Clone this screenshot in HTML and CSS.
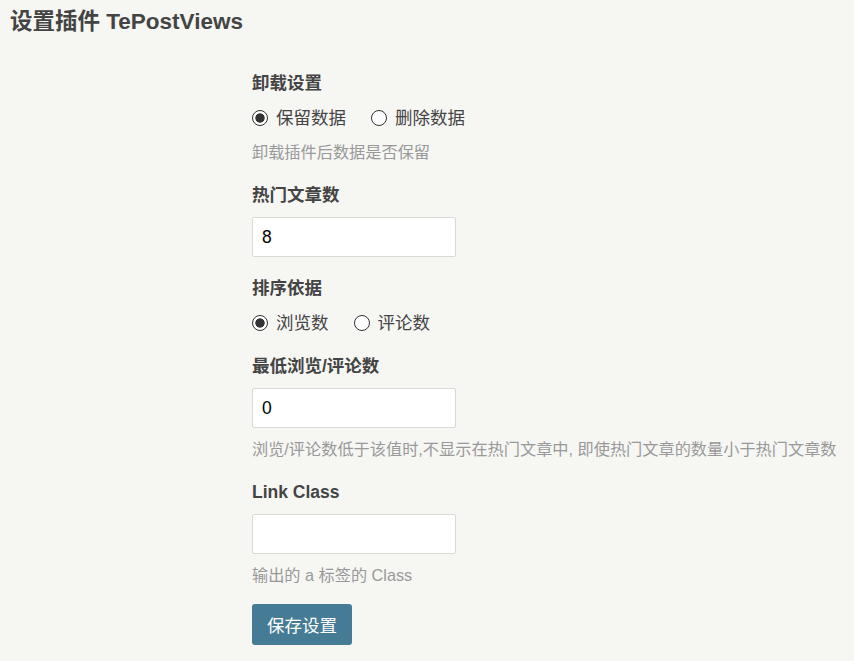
FILE: index.html
```html
<!DOCTYPE html>
<html lang="zh-CN">
<head>
    <meta charset="UTF-8" />
    <meta name="viewport" content="width=device-width, initial-scale=1.0" />
    <title>设置插件 TePostViews</title>
    <link rel="stylesheet" href="styles.css">
</head>
<body>
    <h2 class="page-title">设置插件 TePostViews</h2>

    <form class="option-form">
        <ul class="option">
            <li><label class="option-label">卸载设置</label></li>
            <li class="radio-row">
                <span class="radio-item"><input type="radio" name="drop" id="drop-keep" checked> <label for="drop-keep">保留数据</label></span>
                <span class="radio-item"><input type="radio" name="drop" id="drop-del"> <label for="drop-del">删除数据</label></span>
            </li>
            <li><p class="description">卸载插件后数据是否保留</p></li>
        </ul>

        <ul class="option">
            <li><label class="option-label" for="hotNums">热门文章数</label></li>
            <li><input type="text" class="text" id="hotNums" value="8"></li>
        </ul>

        <ul class="option option-tight">
            <li><label class="option-label">排序依据</label></li>
            <li class="radio-row">
                <span class="radio-item"><input type="radio" name="sort" id="sort-views" checked> <label for="sort-views">浏览数</label></span>
                <span class="radio-item"><input type="radio" name="sort" id="sort-comments"> <label for="sort-comments">评论数</label></span>
            </li>
        </ul>

        <ul class="option">
            <li><label class="option-label" for="minViews">最低浏览/评论数</label></li>
            <li><input type="text" class="text" id="minViews" value="0"></li>
            <li><p class="description">浏览/评论数低于该值时,不显示在热门文章中, 即使热门文章的数量小于热门文章数</p></li>
        </ul>

        <ul class="option">
            <li><label class="option-label" for="linkClass">Link Class</label></li>
            <li><input type="text" class="text" id="linkClass" value=""></li>
            <li><p class="description">输出的 a 标签的 Class</p></li>
        </ul>

        <ul class="option">
            <li><button type="button" class="btn-primary">保存设置</button></li>
        </ul>
    </form>
</body>
</html>
```

FILE: styles.css
```css
body {
    margin: 0;
    background-color: #f6f6f3;
    color: #444;
    font-family: "Liberation Sans", "Noto Sans CJK SC", sans-serif;
    font-size: 17.5px;
}

.page-title {
    margin: 7px 0 0 10px;
    font-size: 22.5px;
    line-height: 30px;
    font-weight: bold;
    color: #444;
}

.option-form {
    padding-left: 252px;
    margin-top: 32px;
}

.option {
    list-style: none;
    margin: 0 0 17px 0;
    padding: 0;
}

.option-tight {
    margin-bottom: 16px;
}

.option-label {
    display: block;
    line-height: 28px;
    margin-bottom: 8px;
    font-weight: bold;
}

.radio-row {
    display: flex;
    line-height: 26px;
}

.radio-item {
    display: flex;
    align-items: center;
    margin-right: 25px;
}

.radio-item input {
    appearance: none;
    -webkit-appearance: none;
    width: 16px;
    height: 16px;
    margin: 0 8px 0 0;
    border: 1px solid #333;
    border-radius: 50%;
    background-color: #fff;
    box-sizing: border-box;
}

.radio-item input:checked {
    background: radial-gradient(circle, #333 0, #333 4.3px, #fff 5px);
}

.description {
    margin: 9px 0 0 0;
    line-height: 24px;
    font-size: 16.2px;
    color: #999;
}

input.text {
    box-sizing: border-box;
    width: 204px;
    height: 40px;
    padding: 0 9px;
    border: 1px solid #d9d9d6;
    border-radius: 2px;
    background-color: #fff;
    font-family: inherit;
    font-size: 17.5px;
    color: #000;
    outline: none;
}

.btn-primary {
    width: 100px;
    height: 41px;
    border: none;
    border-radius: 3px;
    background-color: #467b96;
    color: #fff;
    font-family: inherit;
    font-size: 17.5px;
    cursor: pointer;
}

.btn-primary:hover {
    background-color: #3c6a81;
}
```
